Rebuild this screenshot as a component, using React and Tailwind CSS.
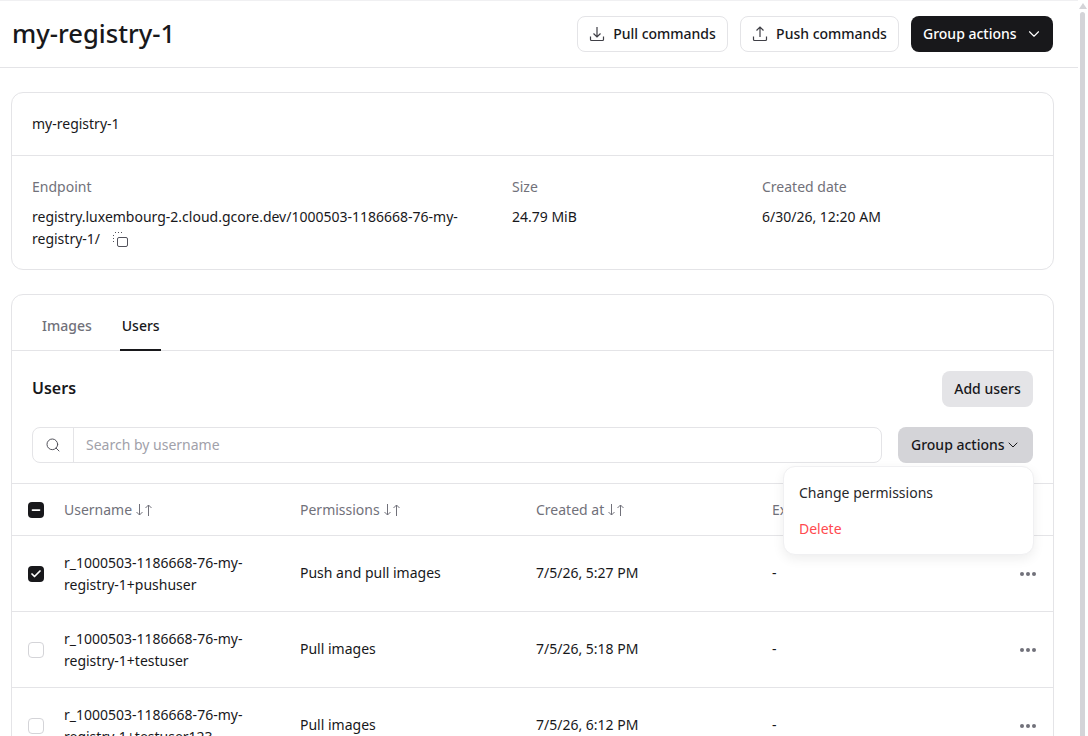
import React from "react";
import { ChevronDown, Search, Check, Minus } from "lucide-react";

const PullIcon = () => (
  <svg width="16" height="16" viewBox="0 0 16 16" fill="none" stroke="#3f3f46" strokeWidth="1.2">
    <path d="M8 1v10M4.5 7.5 8 11l3.5-3.5" />
    <path d="M1.5 10.5v3a1 1 0 0 0 1 1h11a1 1 0 0 0 1-1v-3" />
  </svg>
);

const PushIcon = () => (
  <svg width="16" height="16" viewBox="0 0 16 16" fill="none" stroke="#3f3f46" strokeWidth="1.2">
    <path d="M8 11V1M4.5 4.5 8 1l3.5 3.5" />
    <path d="M1.5 10.5v3a1 1 0 0 0 1 1h11a1 1 0 0 0 1-1v-3" />
  </svg>
);

const CopyIcon = () => (
  <svg width="18" height="18" viewBox="0 0 18 18" fill="none" stroke="#52525b" strokeWidth="1">
    <rect x="5.5" y="6.5" width="10" height="9" rx="1.5" />
    <path d="M3 1.5h1M6 1.5h1M9 1.5h1M1.5 4v1M1.5 7v1M1.5 10v1" />
  </svg>
);

const SortIcon = () => (
  <svg width="16" height="12" viewBox="0 0 16 12" fill="none" stroke="#71717a" strokeWidth="1">
    <path d="M3.5 0v11M.5 8l3 3 3-3" />
    <path d="M12.5 12V1M9.5 4l3-3 3 3" />
  </svg>
);

const Dots = () => (
  <div className="flex gap-[2px]">
    <span className="size-1 rounded-full bg-[#71717a]" />
    <span className="size-1 rounded-full bg-[#71717a]" />
    <span className="size-1 rounded-full bg-[#71717a]" />
  </div>
);

const rows = [
  { name: "r_1000503-1186668-76-my-registry-1+pushuser", perm: "Push and pull images", created: "7/5/26, 5:27 PM", checked: true },
  { name: "r_1000503-1186668-76-my-registry-1+testuser", perm: "Pull images", created: "7/5/26, 5:18 PM", checked: false },
  { name: "r_1000503-1186668-76-my-registry-1+testuser123", perm: "Pull images", created: "7/5/26, 6:12 PM", checked: false },
];

const App = () => {
  return (
    <div className="flex h-[736px] w-[1088px] overflow-hidden bg-white text-sm text-[#18181b] font-['Noto_Sans',sans-serif]">
      <div className="w-[1078px] shrink-0 border-t border-[#f0f0f2]">
        <div className="flex h-[67px] items-center justify-between border-b border-[#e4e4e7] pl-[12px] pr-[25px]">
          <h1 className="text-[25.6px] font-medium">my-registry-1</h1>
          <div className="flex gap-3">
            <button className="flex h-9 w-[151px] items-center justify-center gap-2 rounded-lg border border-[#e4e4e7] font-medium">
              <PullIcon />
              Pull commands
            </button>
            <button className="flex h-9 w-[159px] items-center justify-center gap-2 rounded-lg border border-[#e4e4e7] font-medium">
              <PushIcon />
              Push commands
            </button>
            <button className="flex h-9 w-[142px] items-center gap-2 rounded-lg bg-[#18181b] pl-3 font-medium text-white">
              Group actions
              <ChevronDown size={18} strokeWidth={1.5} />
            </button>
          </div>
        </div>

        <div className="ml-[11px] mt-6 w-[1043px] rounded-xl border border-[#e4e4e7]">
          <div className="flex h-[63px] items-center border-b border-[#e4e4e7] px-5">my-registry-1</div>
          <div className="grid h-[113px] grid-cols-[480px_250px_1fr] px-5 pt-5">
            <div>
              <div className="mb-2 leading-[22px] text-[#71717a]">Endpoint</div>
              <div className="w-[440px] leading-[22px] break-words">
                registry.luxembourg-2.cloud.gcore.dev/1000503-1186668-76-my-registry-1/
                <span className="ml-3 inline-block align-middle"><CopyIcon /></span>
              </div>
            </div>
            <div>
              <div className="mb-2 leading-[22px] text-[#71717a]">Size</div>
              <div className="leading-[22px]">24.79 MiB</div>
            </div>
            <div>
              <div className="mb-2 leading-[22px] text-[#71717a]">Created date</div>
              <div className="leading-[22px]">6/30/26, 12:20 AM</div>
            </div>
          </div>
        </div>

        <div className="relative ml-[11px] mt-6 w-[1043px] rounded-t-xl border border-[#e4e4e7]">
          <div className="flex h-14 gap-[30px] border-b border-[#e4e4e7] pl-[30px]">
            <div className="pt-5 leading-[22px] font-medium text-[#71717a]">Images</div>
            <div className="relative pt-5 leading-[22px] font-medium">
              Users
              <span className="absolute -bottom-px -left-0.5 -right-px h-0.5 bg-[#18181b]" />
            </div>
          </div>

          <div className="flex items-center justify-between px-5 pt-5">
            <h2 className="pb-0.5 text-base font-semibold">Users</h2>
            <button className="h-9 w-[91px] rounded-lg bg-[#e4e4e7] font-medium">Add users</button>
          </div>

          <div className="flex gap-4 px-5 pt-5">
            <div className="flex h-9 flex-1 rounded-lg border border-[#e4e4e7]">
              <div className="flex w-[41px] items-center justify-center border-r border-[#e4e4e7]">
                <Search size={16} strokeWidth={1.5} color="#52525b" />
              </div>
              <div className="flex items-center pl-3 text-[#a1a1aa]">Search by username</div>
            </div>
            <button className="flex h-9 w-[135px] items-center rounded-lg bg-[#d4d4d8] pl-[13px] font-medium">
              Group actions
              <ChevronDown size={16} strokeWidth={1.5} />
            </button>
          </div>

          <div className="mt-5 border-t border-[#e4e4e7]">
            <div className="flex h-[52px] items-center border-b border-[#e4e4e7] text-[#71717a]">
              <div className="flex w-[52px] shrink-0 pl-4">
                <span className="flex size-4 items-center justify-center rounded bg-[#18181b] text-white">
                  <Minus size={12} strokeWidth={3.5} />
                </span>
              </div>
              <div className="flex w-[236px] items-center gap-1">Username <SortIcon /></div>
              <div className="flex w-[236px] items-center gap-1">Permissions <SortIcon /></div>
              <div className="flex w-[236px] items-center gap-1">Created at <SortIcon /></div>
              <div>Expiry date</div>
            </div>
            {rows.map((row) => (
              <div key={row.name} className="flex h-[76px] items-center border-b border-[#e4e4e7]">
                <div className="flex w-[52px] shrink-0 pl-4">
                  {row.checked ? (
                    <span className="flex size-4 items-center justify-center rounded bg-[#18181b] text-white">
                      <Check size={12} strokeWidth={3.5} />
                    </span>
                  ) : (
                    <span className="size-4 rounded border border-[#d4d4d8]" />
                  )}
                </div>
                <div className="w-[236px] pr-10 leading-[22px] break-words">{row.name}</div>
                <div className="w-[236px] pb-0.5">{row.perm}</div>
                <div className="w-[236px] pb-0.5">{row.created}</div>
                <div className="flex-1 pb-0.5">-</div>
                <div className="pr-[17px]"><Dots /></div>
              </div>
            ))}
          </div>

          <div className="absolute left-[771px] top-[171px] z-10 flex h-[89px] w-[251px] flex-col rounded-xl border border-[#f0f0f2] bg-white px-[15px] pt-2 shadow-[0_4px_12px_rgba(0,0,0,0.07)]">
            <div className="flex h-9 items-center text-[#27272a]">Change permissions</div>
            <div className="flex h-9 items-center text-[#ff4a4f]">Delete</div>
          </div>
        </div>
      </div>
      <div className="flex w-[10px] shrink-0 flex-col items-center pr-[1px]">
        <svg width="8" height="6" viewBox="0 0 8 6" fill="#d4d4d8" className="mt-[3px]">
          <path d="M4 0 8 6H0z" />
        </svg>
        <div className="mt-[3px] w-[5px] flex-1 rounded-t-sm bg-[#d4d4d8]" />
      </div>
    </div>
  );
};

export default App;
